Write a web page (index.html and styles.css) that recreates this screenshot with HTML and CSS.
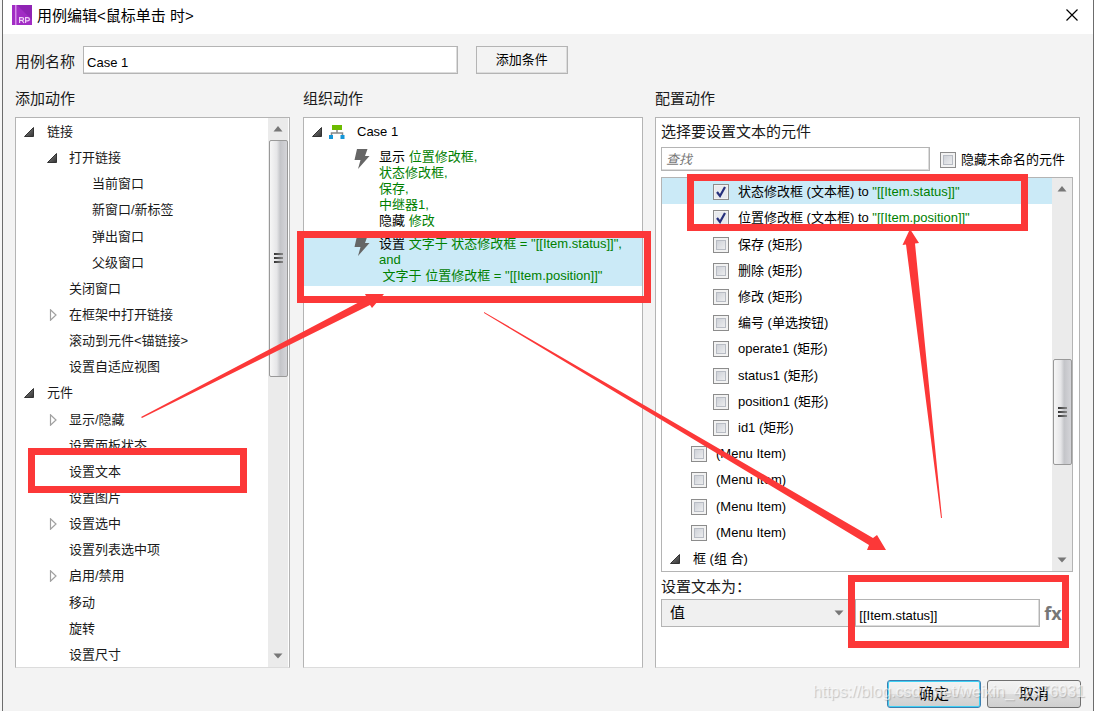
FILE: index.html
```html
<!DOCTYPE html>
<html lang="zh-CN">
<head>
<meta charset="utf-8">
<title>用例编辑</title>
<link rel="stylesheet" href="styles.css">
</head>
<body>
<svg class="defs" aria-hidden="true">
  <defs>
    <linearGradient id="tri" x1="0" y1="0" x2="1" y2="1"><stop offset="0" stop-color="#888"/><stop offset="1" stop-color="#333"/></linearGradient>
    <symbol id="open" viewBox="0 0 10 10"><path d="M9.500 .5V9.500H.5Z" fill="url(#tri)" stroke="#333" stroke-width="1"/></symbol>
    <symbol id="closed" viewBox="0 0 10 12"><path d="M3.500 .8V11.200L9 6Z" fill="#fff" stroke="#a0a0a0" stroke-width="1.200"/></symbol>
    <symbol id="up" viewBox="0 0 10 6"><path d="M5 0L9.500 5.500H.5Z" fill="#777"/></symbol>
    <symbol id="down" viewBox="0 0 10 6"><path d="M.5 .5H9.500L5 5.500Z" fill="#777"/></symbol>
    <symbol id="bolt" viewBox="0 0 16 20"><path d="M3 0H13.500L11 7H15.500L4 20L6.500 11H.5Z" fill="#666"/></symbol>
  </defs>
</svg>

<main class="dialog">
  <header class="titlebar">
    <svg class="logo" viewBox="0 0 20 20" aria-hidden="true"><path d="M0 0H20V20H0Z" fill="#a12cc4"/><path d="M5 0H20V15Z" fill="#8f23b3"/><path d="M3 0H4.500V20H3Z" fill="#d58be8"/><g fill="none" stroke="#efd0f7" stroke-width="1.200"><path d="M7.600 18V12.600H10Q11.700 12.600 11.700 14Q11.700 15.400 10 15.400H7.600M10 15.400L12 18M13.600 18V12.600H15.500Q17.400 12.600 17.400 14.200Q17.400 15.800 15.500 15.800H13.600"/></g></svg>
    <h1 class="title">用例编辑&lt;鼠标单击 时&gt;</h1>
    <button class="close" aria-label="关闭"><svg viewBox="0 0 12 12"><path d="M.5 .5L11.500 11.500M11.500 .5L.5 11.500" stroke="#000" stroke-width="1.200"/></svg></button>
  </header>

  <div class="content">
    <div class="name-row">
      <label class="heading name-label" for="case-name">用例名称</label>
      <input class="field name-input" id="case-name" value="Case 1">
      <button class="condition">添加条件</button>
    </div>

    <div class="columns">
      <section class="column actions-column">
        <h2 class="heading">添加动作</h2>
        <div class="panel tree-panel">
          <ul class="tree">
            <li class="node l1"><svg class="twist"><use href="#open"/></svg>链接</li>
            <li class="node l2"><svg class="twist"><use href="#open"/></svg>打开链接</li>
            <li class="node l3">当前窗口</li>
            <li class="node l3">新窗口/新标签</li>
            <li class="node l3">弹出窗口</li>
            <li class="node l3">父级窗口</li>
            <li class="node leaf">关闭窗口</li>
            <li class="node l2"><svg class="twist shut"><use href="#closed"/></svg>在框架中打开链接</li>
            <li class="node leaf">滚动到元件&lt;锚链接&gt;</li>
            <li class="node leaf">设置自适应视图</li>
            <li class="node l1"><svg class="twist"><use href="#open"/></svg>元件</li>
            <li class="node l2"><svg class="twist shut"><use href="#closed"/></svg>显示/隐藏</li>
            <li class="node leaf">设置面板状态</li>
            <li class="node leaf">设置文本</li>
            <li class="node leaf">设置图片</li>
            <li class="node l2"><svg class="twist shut"><use href="#closed"/></svg>设置选中</li>
            <li class="node leaf">设置列表选中项</li>
            <li class="node l2"><svg class="twist shut"><use href="#closed"/></svg>启用/禁用</li>
            <li class="node leaf">移动</li>
            <li class="node leaf">旋转</li>
            <li class="node leaf">设置尺寸</li>
          </ul>
          <div class="scroll" aria-hidden="true">
            <svg class="scroll-arrow"><use href="#up"/></svg>
            <div class="track track-actions"><div class="thumb"><i></i><i></i><i></i></div></div>
            <svg class="scroll-arrow"><use href="#down"/></svg>
          </div>
        </div>
      </section>

      <section class="column">
        <h2 class="heading">组织动作</h2>
        <div class="panel case-panel">
          <div class="case-row">
            <svg class="twist"><use href="#open"/></svg>
            <svg class="case-icon" viewBox="0 0 16 14"><path d="M3 0H13V5H3Z" fill="#6cbb00"/><path d="M8 5V8M2.500 11V8H13.500V11" fill="none" stroke="#888" stroke-width="1.500"/><path d="M0 10H4V14H0ZM11.500 10H15.500V14H11.500Z" fill="#1496d8"/></svg>
            <span>Case 1</span>
          </div>
          <div class="action">
            <svg class="bolt"><use href="#bolt"/></svg>
            <p><b>显示</b> 位置修改框,<br>状态修改框,<br>保存,<br>中继器1,<br><b>隐藏</b> 修改</p>
          </div>
          <div class="action selected">
            <svg class="bolt"><use href="#bolt"/></svg>
            <p><b>设置</b> 文字于 状态修改框 = "[[Item.status]]",<br>and<br>&nbsp;文字于 位置修改框 = "[[Item.position]]"</p>
          </div>
        </div>
      </section>

      <section class="column">
        <h2 class="heading">配置动作</h2>
        <div class="panel config-panel">
          <h3 class="heading">选择要设置文本的元件</h3>
          <div class="search-row">
            <input class="field search" placeholder="查找" aria-label="查找">
            <label class="check"><input type="checkbox">隐藏未命名的元件</label>
          </div>
          <div class="widget-box">
            <div class="widgets">
              <label class="check widget picked"><input type="checkbox" checked><span>状态修改框 (文本框) to <em>"[[Item.status]]"</em></span></label>
              <label class="check widget"><input type="checkbox" checked><span>位置修改框 (文本框) to <em>"[[Item.position]]"</em></span></label>
              <label class="check widget"><input type="checkbox">保存 (矩形)</label>
              <label class="check widget"><input type="checkbox">删除 (矩形)</label>
              <label class="check widget"><input type="checkbox">修改 (矩形)</label>
              <label class="check widget"><input type="checkbox">编号 (单选按钮)</label>
              <label class="check widget"><input type="checkbox">operate1 (矩形)</label>
              <label class="check widget"><input type="checkbox">status1 (矩形)</label>
              <label class="check widget"><input type="checkbox">position1 (矩形)</label>
              <label class="check widget"><input type="checkbox">id1 (矩形)</label>
              <label class="check widget outer"><input type="checkbox">(Menu Item)</label>
              <label class="check widget outer"><input type="checkbox">(Menu Item)</label>
              <label class="check widget outer"><input type="checkbox">(Menu Item)</label>
              <label class="check widget outer"><input type="checkbox">(Menu Item)</label>
              <div class="node group"><svg class="twist"><use href="#open"/></svg>框 (组 合)</div>
            </div>
            <div class="scroll" aria-hidden="true">
              <svg class="scroll-arrow"><use href="#up"/></svg>
              <div class="track track-widgets"><div class="thumb"><i></i><i></i><i></i></div></div>
              <svg class="scroll-arrow"><use href="#down"/></svg>
            </div>
          </div>
          <label class="heading value-label" for="kind">设置文本为：</label>
          <div class="value-row">
            <div class="select-wrap">
              <select id="kind"><option>值</option></select>
              <svg class="caret"><use href="#down"/></svg>
            </div>
            <input class="field value" value="[[Item.status]]" aria-label="值">
            <button class="fx">fx</button>
          </div>
        </div>
      </section>
    </div>

    <footer class="footer">
      <button class="push primary">确定</button>
      <button class="push">取消</button>
      <span class="watermark">https://blog.csdn.net/weixin_42376931</span>
    </footer>
  </div>
</main>

<svg class="marks" viewBox="0 0 1094 711" aria-hidden="true">
  <g fill="none" stroke="#fc3838" stroke-width="7">
    <rect x="31.500" y="451.500" width="212" height="38"/>
    <rect x="300.500" y="234.500" width="347" height="65"/>
    <rect x="690.500" y="177.500" width="334" height="50"/>
    <rect x="851.500" y="578.500" width="214" height="66"/>
  </g>
  <g fill="#fc3838">
    <path d="M141 417L367 298L365 294H384L372 308L370 305L142 418Z"/>
    <path d="M484 312L873 538L877 535L886 550L867 550L869 545L484 313Z"/>
    <path d="M941 518L906 244.500L902.500 245L910 229L919 243L915 243.500L942 518Z"/>
  </g>
</svg>
</body>
</html>
```
FILE: styles.css
```css
* { box-sizing: border-box; }

body {
  margin: 0;
  min-height: 100vh;
  display: flex;
  padding-left: 2px;
  background: #f6f6f6;
  color: #1a1a1a;
  font: 13px/16px "Liberation Sans", "Noto Sans CJK SC", sans-serif;
}

h1, h2, h3, p, ul { margin: 0; padding: 0; font-weight: 400; }
button, input, select { font: inherit; color: #000; margin: 0; }
b { font-weight: 400; color: #000; }
em { font-style: normal; color: #008000; }
.defs { position: absolute; width: 0; height: 0; }

.dialog {
  flex: 1;
  min-width: 0;
  display: flex;
  flex-direction: column;
  background: #f3f3f3;
  border: solid #6c6c6c;
  border-width: 0 1px;
}

.titlebar {
  height: 34px;
  display: flex;
  align-items: center;
  gap: 5px;
  padding: 0 11px 4px 9px;
  background: #fff;
}
.logo { width: 20px; height: 20px; }
.title { flex: 1; padding-top: 2px; font-size: 15px; line-height: 20px; color: #000; }
.close { width: 20px; height: 20px; padding: 4px; border: 0; background: none; }
.close svg { display: block; width: 12px; height: 12px; }

.content {
  flex: 1;
  display: flex;
  flex-direction: column;
  padding: 12px 13px 3px 12px;
}
.heading { font-size: 15px; line-height: 20px; }

.name-row { display: flex; align-items: center; height: 28px; }
.name-label { padding-top: 4px; }
.field { border: 1px solid #b4b4b4; box-shadow: inset -1px -1px #dcdcdc; background: #fff; outline: 0; border-radius: 0; }
.name-input { width: calc(35% + 2px); height: 28px; margin: 0 18px 0 8px; padding: 4px 3px 0; }
.condition { width: 92px; height: 28px; border: 1px solid #b4b4b4; box-shadow: inset -1px -1px #dcdcdc; background: #f3f3f3; }

.columns {
  flex: 1;
  display: grid;
  grid-template-columns: 276fr 340fr 425fr;
  gap: 12px;
  padding-top: 15px;
}
.column { display: flex; flex-direction: column; min-width: 0; gap: 8px; }
.actions-column { padding-right: 1px; }
.panel { flex: 1; background: #fff; border: 1px solid #b4b4b4; border-bottom-color: #dcdcdc; }

.tree-panel { display: flex; padding-right: 1px; }
.tree { flex: 1; display: flex; flex-direction: column; list-style: none; }
.node { flex: 1; display: flex; align-items: center; padding-top: 2px; }
.l1 { padding-left: 8px; }
.l2 { padding-left: 31px; }
.leaf { padding-left: 53px; }
.l3 { padding-left: 76px; }
.twist { width: 10px; height: 10px; margin-right: 13px; flex: none; }
.l2 .twist { margin-right: 12px; }
.twist.shut { height: 12px; }

.scroll { width: 20px; display: flex; flex-direction: column; align-items: center; background: #ebebeb; }
.scroll-arrow { width: 10px; height: 6px; margin: 8px 0; }
.track { flex: 1; width: 19px; display: grid; }
.track-actions { grid-template-rows: 237fr 269fr; }
.track-widgets { grid-template-rows: 159fr 107fr 84fr; }
.track-widgets .thumb { grid-row: 2; }
.thumb {
  display: flex;
  flex-direction: column;
  align-items: center;
  justify-content: center;
  gap: 2px;
  border: 1px solid #999;
  border-radius: 2px;
  background: linear-gradient(90deg, #f6f6f6, #e6e6e8 40%, #c4c5c9 60%, #d4d4d8);
}
.thumb i { width: 9px; height: 2px; background: linear-gradient(90deg, #333, #888); }

.case-panel { padding-top: 1px; }
.case-row { display: flex; align-items: center; height: 26px; padding-left: 8px; color: #000; }
.case-row .twist { margin-right: 7px; }
.case-icon { width: 16px; height: 14px; margin-right: 12px; }
.action { display: flex; gap: 9px; padding: 4px 0 4px 50px; color: #008000; white-space: nowrap; }
.action.selected { padding: 3px 0 2px 50px; background: #cbeaf7; }
.bolt { width: 16px; height: 20px; flex: none; }

.config-panel { display: flex; flex-direction: column; padding: 4px 6px 40px 5px; }
.search-row { display: flex; align-items: center; gap: 10px; margin: 5px 0 6px; padding-right: 8px; }
.search { flex: 1; min-width: 0; height: 24px; padding: 0 4px; }
.search::placeholder { color: #777; font-style: italic; opacity: 1; }
.check { display: flex; align-items: center; gap: 5px; padding-top: 2px; color: #000; }
.check input {
  appearance: none;
  width: 16px;
  height: 16px;
  flex: none;
  border: 1px solid #8c8c8c;
  outline: 0;
  box-shadow: inset 0 0 0 2px #f2f2f2, inset 0 0 0 3px #b8bcc4;
  background: linear-gradient(135deg, #c4c8d0, #f6f6f6);
}
.check input:checked {
  background: url("data:image/svg+xml,%3Csvg xmlns='http://www.w3.org/2000/svg' viewBox='0 0 14 14'%3E%3Cpath d='M3 7L6 11L11 2' fill='none' stroke='%2326307c' stroke-width='2.2'/%3E%3C/svg%3E") center / 14px 14px no-repeat, #e8eaee;
  box-shadow: inset 0 0 0 1px #f2f2f2;
}

.widget-box { flex: 1; display: flex; border: 1px solid #b4b4b4; }
.widgets { flex: 1; display: flex; flex-direction: column; }
.widget { flex: 1; gap: 9px; padding-left: 51px; }
.widget.outer { padding-left: 29px; }
.picked { background: #cbeaf7; }
.group { padding-left: 8px; color: #000; }
.value-label { margin: 5px 0 2px; }
.value-row { display: flex; align-items: center; padding-right: 7px; }
.select-wrap { position: relative; flex: 195; display: flex; }
.select-wrap select {
  appearance: none;
  width: 100%;
  height: 28px;
  padding: 0 8px;
  border: 1px solid #b4b4b4;
  border-radius: 0;
  background: #f0f0f0;
  font-size: 15px;
}
.caret { position: absolute; right: 6px; top: 11px; width: 10px; height: 6px; pointer-events: none; }
.value { flex: 182; min-width: 0; height: 28px; margin-left: 5px; padding: 4px 3px 0; }
.fx { width: 26px; padding: 0; border: 0; background: none; color: #777; font: 700 18px/20px "Open Sans", sans-serif; }

.footer { position: relative; display: flex; justify-content: flex-end; gap: 6px; margin-right: -1px; padding-top: 12px; }
.push {
  width: 94px;
  height: 28px;
  padding: 0;
  border: 1px solid #707070;
  border-radius: 3px;
  background: linear-gradient(#f3f3f3, #ebebeb 48%, #dcdcdc 52%, #cfcfcf);
  font-size: 15px;
}
.push.primary { border-color: #3c7fb1; box-shadow: inset 0 0 0 1px #3fd0f4; }
.watermark {
  position: absolute;
  right: -4px;
  bottom: 6px;
  color: rgba(255, 255, 255, .6);
  text-shadow: 1px 1px 1px rgba(120, 120, 120, .4);
  font: 16px/20px "Liberation Sans", sans-serif;
  white-space: nowrap;
  pointer-events: none;
}

.marks { position: absolute; left: 0; top: 0; width: 100%; pointer-events: none; }
```
